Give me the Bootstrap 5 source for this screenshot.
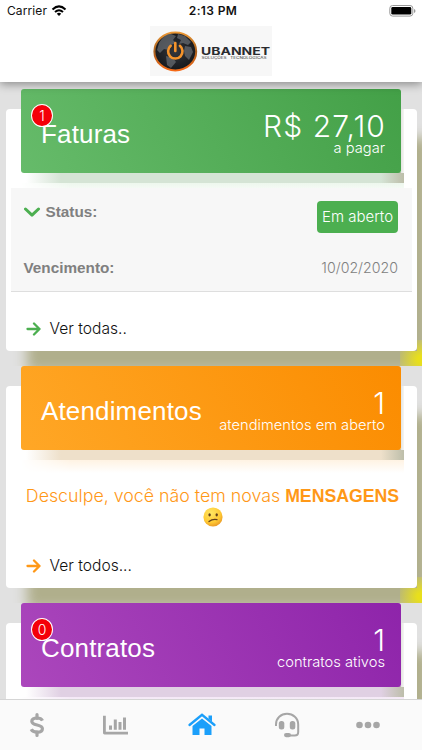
<!DOCTYPE html>
<html lang="pt-BR">
<head>
<meta charset="utf-8">
<meta name="viewport" content="width=device-width, initial-scale=1">
<title>Ubannet</title>
<link href="https://cdn.jsdelivr.net/npm/bootstrap@5.3.0/dist/css/bootstrap.min.css" rel="stylesheet">
<style>
body{width:422px;height:750px;overflow:hidden;font-family:"Liberation Sans",sans-serif;background:#e1e1e1;line-height:1.2}
.topbar{height:82px;background:#fff;box-shadow:0 2px 9px rgba(0,0,0,.4);z-index:5;flex:none}
.status{height:22px;font:500 12px/22px Inter,sans-serif;color:#111;padding:0 6px 0 7px}
.status>div{flex:1}
.carrier{font-weight:400;letter-spacing:.1px}
.clock{font-weight:600;flex:none!important;letter-spacing:.35px;padding-left:3px}
.logo-box{width:122px;height:50px;margin:4px auto 0;background:#f7f7f7}
.panel{position:relative;overflow:hidden;padding:20px 5px 0 5.5px;background:#e1e1e1}
.panel::after{content:"";position:absolute;right:0;bottom:0;width:22px;height:26px;background:radial-gradient(ellipse at 100% 75%,#e8df1c 15%,#e8df1c00 90%);clip-path:polygon(100% 0,100% 100%,0 100%,0 11px,17px 11px,17px 0);z-index:2}
.panel-a{height:284px;padding-top:27px}
.panel-b{height:237px}
.panel-c{height:147px}
.sheet{display:flow-root;position:relative;z-index:1;background:#fff;border-radius:4px;box-shadow:17px 25px 12px -4px #b0af8c}
.panel-a .sheet{height:242px}.panel-b .sheet{height:202px}.panel-c .sheet{height:260px}
.hero-clip{margin:-20px 0 0 15.5px;width:383px;height:94px;overflow:hidden;position:relative}
.hero{width:380px;height:84px;border-radius:3px;color:#fff;padding:0 16px 0 20px;position:relative}
.hero-clip::before{content:"";position:absolute;left:5px;right:0;bottom:0;height:11px;background:linear-gradient(90deg,#fff0,var(--s) 35px,var(--s) 355px,#bdbeaa)}
.hero-clip::after{content:"";position:absolute;right:0;top:20px;bottom:10px;width:3px;background:linear-gradient(90deg,#e4e4e0,#f6f6f4)}
.halo{height:13px;width:383px;margin-left:15.5px;background:linear-gradient(var(--h),#fff);-webkit-mask-image:linear-gradient(90deg,transparent,#000 50px)}
.green{--s:#d5e4d5;--h:#edf7ed}.orange{--s:#eee0ca;--h:#fff3e3}.purple{--s:#e0d0e3;--h:#f4e8f6}
.green .hero{background:linear-gradient(60deg,#66bb6a,#43a047)}
.orange .hero{background:linear-gradient(60deg,#ffa726,#fb8c00)}
.purple .hero{background:linear-gradient(60deg,#ab47bc,#8e24aa)}
.ttl{font-size:26px;line-height:30px;padding-top:30px;white-space:nowrap;letter-spacing:.15px}
.amount{font:300 30px/30px Inter,"Liberation Sans",sans-serif;padding-top:22px}
.price{letter-spacing:1.1px;margin-right:-1px}
.thin{font-family:Inter,"Liberation Sans",sans-serif;font-weight:300}
.subt{font-size:14.7px;line-height:15px;white-space:nowrap}
.count{position:absolute;left:10px;top:15px;width:22px;height:23px;border-radius:50%;background:#f40008;border:1px solid #fff;font-size:14px;line-height:21px;text-align:center}
.details{position:relative;height:104px;margin:-8px 5px 0;background:#f7f7f7;border-bottom:1.5px solid #dedede;color:#808080;font-size:15.3px;padding:13px 14px 0 13px}
.state{padding-top:2px}
.pill{background:#4caf50;color:#fff;border-radius:4px;width:81px;height:32px;line-height:32px;text-align:center;font-size:15px}
.due{margin-top:26px}
.due .thin{font-size:14.2px}
.more{color:#111;font-size:15.6px;line-height:20px;padding-left:20px;gap:9px}
.panel-a .more{padding-top:27px}
.msg{color:#ff9817;font-size:17.8px;line-height:22px;white-space:nowrap;padding:20px 15px 0 17.5px;height:91px;margin-top:-8px}
.msg b{font-family:"Liberation Sans",sans-serif;font-size:17.7px;font-weight:700}
.tabs{height:51px;background:#fafafa;border-top:1.5px solid #d5d5d5;z-index:5;color:#a6a6a6;padding:0 42px 0 29px}
</style>
<script src="https://cdn.jsdelivr.net/npm/bootstrap@5.3.0/dist/js/bootstrap.bundle.min.js"></script>
</head>
<body>
<header class="topbar position-relative">
  <div class="status d-flex align-items-center">
    <div class="d-flex align-items-center"><span class="carrier">Carrier</span>
      <svg class="ms-1" width="16" height="12" viewBox="0 0 16 12" fill="none" stroke="#000" stroke-width="2"><path d="M1.5 4.4Q8-1.6 14.5 4.4M4 7Q8 3.4 12 7"/><path d="M5.8 8.7Q8 6.9 10.2 8.7L8 11Z" fill="#000" stroke="none"/></svg></div>
    <div class="clock">2:13 PM</div>
    <div class="d-flex justify-content-end"><svg width="27" height="12" viewBox="0 0 27 12"><rect x=".8" y=".5" width="23" height="10.6" rx="2.8" fill="#fff" stroke="#999"/><rect x="2.3" y="2" width="20" height="7.6" rx="1.4"/><path d="M25 4v4q1.5-.5 1.5-2T25 4" fill="#999"/></svg></div>
  </div>
  <div class="logo-box">
    <svg class="d-block" width="122" height="50" viewBox="0 0 122 50">
      <defs><linearGradient id="ring" x2="0" y2="1"><stop stop-color="#eb9734"/><stop offset=".5" stop-color="#a8601f"/><stop offset="1" stop-color="#f56a17"/></linearGradient><radialGradient id="globe"><stop stop-color="#34363b"/><stop offset="1" stop-color="#17191d"/></radialGradient></defs>
      <ellipse cx="25.3" cy="25.4" rx="20.9" ry="19" fill="url(#globe)" stroke="url(#ring)" stroke-width="2"/>
      <path d="M9 17q5-9 12-9l5 2-3 4 3 3-5 2-2 5-5-1-4 4-3-3ZM28 8l7 2 6 6-3 3-5-2-4 1 2-4-4-2ZM35 20l6 1 2 5-4 8-4-4-1-5ZM16 30l7 2 3 4-5 6-4-3Z" fill="#777b82" opacity=".6"/>
      <path d="M20.7 19.8a7.2 7.2 0 1 0 9.2 0M25.3 17v8" fill="none" stroke="#f4932b" stroke-width="2.6" stroke-linecap="round"/>
      <text x="51" y="28.6" font-family="Inter,sans-serif" font-size="10" font-weight="700" fill="#292a2e" textLength="69" lengthAdjust="spacingAndGlyphs">UBANNET</text>
      <text x="51.5" y="33" font-family="Inter,sans-serif" font-size="3.4" font-weight="500" fill="#555" textLength="65" lengthAdjust="spacingAndGlyphs" xml:space="preserve">SOLUÇÕES   TECNOLÓGICAS</text>
    </svg>
  </div>
</header>
<main>
  <section class="panel panel-a"><div class="sheet green">
    <div class="hero-clip"><div class="hero d-flex justify-content-between">
      <div class="ttl">Faturas</div><div class="text-end"><div class="amount price">R$ 27,10</div><div class="subt thin">a pagar</div></div>
      <span class="count thin">1</span></div></div>
    <div class="halo"></div>
    <div class="details">
      <div class="d-flex justify-content-between"><div class="d-flex fw-bold"><svg class="me-1" width="18" height="22" viewBox="0 0 18 22"><path d="M1.5 8L8 14.2 14.500 8" fill="none" stroke="#4caf50" stroke-width="3" stroke-linecap="round" stroke-linejoin="round"/></svg><span class="state">Status:</span></div><span class="pill thin">Em aberto</span></div>
      <div class="due d-flex justify-content-between"><b>Vencimento:</b><span class="thin">10/02/2020</span></div>
    </div>
    <div class="more d-flex align-items-center"><svg width="15" height="14" viewBox="0 0 15 14"><path d="M1.500 7h12M8 1.500L13.500 7 8 12.500" fill="none" stroke="#4caf50" stroke-width="2.300" stroke-linecap="round" stroke-linejoin="round"/></svg><span class="thin">Ver todas..</span></div>
  </div></section>
  <section class="panel panel-b"><div class="sheet orange">
    <div class="hero-clip"><div class="hero d-flex justify-content-between">
      <div class="ttl">Atendimentos</div><div class="text-end"><div class="amount">1</div><div class="subt thin">atendimentos em aberto</div></div></div></div>
    <div class="halo"></div>
    <div class="msg thin text-center"><span>Desculpe, você não tem novas</span> <b>MENSAGENS</b><br>
      <svg class="align-top" width="20" height="20" viewBox="0 0 20 20"><defs><radialGradient id="face" cx=".4" cy=".3" r=".75"><stop stop-color="#ffe764"/><stop offset=".65" stop-color="#ffc933"/><stop offset="1" stop-color="#e79323"/></radialGradient></defs><circle cx="10" cy="10" r="9.600" fill="url(#face)"/><ellipse cx="6.600" cy="7.800" rx="1.200" ry="1.600" fill="#64401c"/><ellipse cx="13.700" cy="7.800" rx="1.200" ry="1.600" fill="#64401c"/><path d="M6 14.500q3.500-2.800 8-1.900" fill="none" stroke="#64401c" stroke-width="1.300" stroke-linecap="round"/></svg></div>
    <div class="more d-flex align-items-center"><svg width="15" height="14" viewBox="0 0 15 14"><path d="M1.500 7h12M8 1.500L13.500 7 8 12.500" fill="none" stroke="#ff9817" stroke-width="2.300" stroke-linecap="round" stroke-linejoin="round"/></svg><span class="thin">Ver todos...</span></div>
  </div></section>
  <section class="panel panel-c"><div class="sheet purple">
    <div class="hero-clip"><div class="hero d-flex justify-content-between">
      <div class="ttl">Contratos</div><div class="text-end"><div class="amount">1</div><div class="subt thin">contratos ativos</div></div>
      <span class="count thin">0</span></div></div>
    <div class="halo"></div>
  </div></section>
</main>
<nav class="tabs fixed-bottom d-flex justify-content-between align-items-center">
  <svg width="16" height="26" viewBox="0 0 16 26" fill="none" stroke="currentColor" stroke-width="3.200"><path d="M13.500 8.600C12.500 6.600 10.500 6 8 6 4.800 6 2.800 7.200 2.800 9.300c0 5 10.600 2.500 10.600 7.400 0 2.100-2 3.500-5.200 3.500-2.800 0-4.900-.7-6-2.900"/><path d="M8 2.500v3.800M8 20v3.500" stroke-linecap="round"/></svg>
  <svg width="25" height="20" viewBox="0 0 25 20" fill="currentColor"><path d="M0 .7h2.800v16H25v2.700H1.500Q0 19.400 0 18ZM6 10.500h3v4.200H6ZM10.800 4.500h3v10.200h-3ZM15.500 7h3v7.700h-3ZM20 2.500h3v12.200h-3Z"/></svg>
  <svg width="28" height="24" viewBox="-2 0 28 24" overflow="visible"><path d="M1.500 12L14 1.800 26.500 12" fill="none" stroke="#1b9ffa" stroke-width="2.300" stroke-linecap="round"/><path d="M20.500 2.500H24v6l-3.500-2.800ZM14 5.500L23.500 13v9h-7v-6.500h-5V22h-7v-9Z" fill="#1b9ffa"/></svg>
  <svg width="26" height="26" viewBox="-2 0 26 26" overflow="visible"><path d="M2 14V12.500C2 6 7 1.800 13 1.800S24.200 6 24.200 12.500V20q0 3.500-3.500 3.500H14" fill="none" stroke="currentColor" stroke-width="2"/><rect x="4.800" y="9" width="5.500" height="8.500" rx="2.500" fill="currentColor"/><rect x="15.800" y="9" width="5.500" height="8.500" rx="2.500" fill="currentColor"/><rect x="10" y="21" width="7" height="4.200" rx="2.100" fill="currentColor"/></svg>
  <svg width="24" height="8" viewBox="0 0 24 8" fill="currentColor"><circle cx="3.500" cy="4" r="3.300"/><circle cx="12" cy="4" r="3.300"/><circle cx="20.500" cy="4" r="3.300"/></svg>
</nav>
</body>
</html>
